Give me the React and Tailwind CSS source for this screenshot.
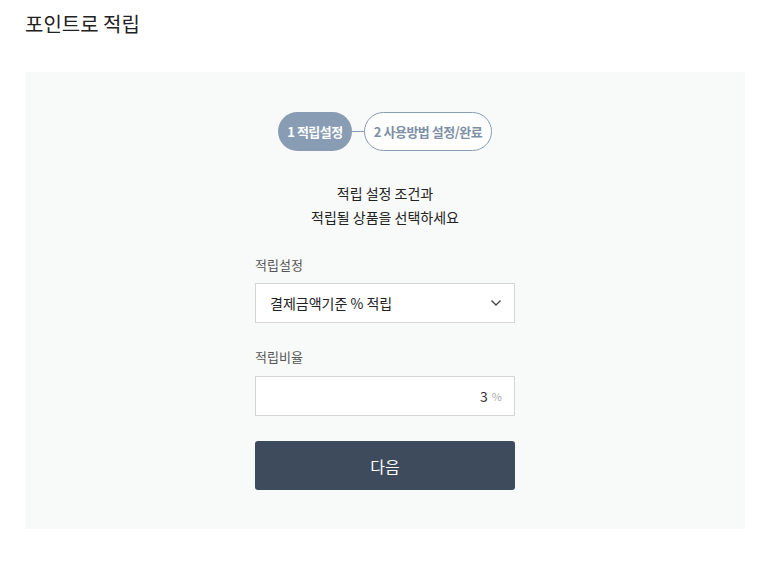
import React from 'react';

const font = { fontFamily: '"Noto Sans CJK KR", "Noto Sans", sans-serif' };

export default function App() {
  return (
    <div className="min-h-[566px] bg-white px-[25px] pt-[8px]" style={font}>
      <h1 className="text-[20px] leading-[32px] text-[#222] font-normal">포인트로 적립</h1>

      <div className="mt-[32px] w-[720px] bg-[#f8f9f9] pt-[40px] pb-[39px] flex flex-col items-center">
        {/* steps */}
        <div className="flex items-center">
          <div className="h-[39px] w-[74px] rounded-full bg-[#889db4] text-white text-[13px] font-bold flex items-center justify-center tracking-[-0.5px]">
            1 적립설정
          </div>
          <div className="w-[12px] h-px bg-[#889db4]" />
          <div className="h-[39px] w-[128px] rounded-full border border-[#889db4] bg-white text-[#7d90a5] text-[13px] font-bold flex items-center justify-center tracking-[-0.5px]">
            2 사용방법 설정/완료
          </div>
        </div>

        <p className="mt-[30px] text-center text-[14px] leading-[24px] text-[#222]">
          적립 설정 조건과<br />적립될 상품을 선택하세요
        </p>

        <div className="mt-[26px] w-[260px]">
          <label className="block text-[13px] leading-[20px] text-[#555]">적립설정</label>
          <div className="mt-[8px] h-[40px] border border-[#d5d5d5] bg-white flex items-center justify-between pl-[14px] pr-[12px]">
            <span className="text-[14px] text-[#222]">결제금액기준 % 적립</span>
            <svg width="12" height="8" viewBox="0 0 12 8" fill="none">
              <path d="M1.5 1.5L6 6L10.5 1.5" stroke="#444" strokeWidth="1.3" />
            </svg>
          </div>

          <label className="block mt-[24px] text-[13px] leading-[20px] text-[#555]">적립비율</label>
          <div className="mt-[9px] h-[40px] border border-[#d5d5d5] bg-white flex items-center justify-end pr-[12px] gap-[4px]">
            <span className="text-[14px] text-[#333]">3</span>
            <span className="text-[11px] text-[#aaa]">%</span>
          </div>

          <button className="mt-[25px] w-full h-[49px] rounded-[3px] bg-[#3d4b5c] text-white text-[16px]">
            다음
          </button>
        </div>
      </div>
    </div>
  );
}
